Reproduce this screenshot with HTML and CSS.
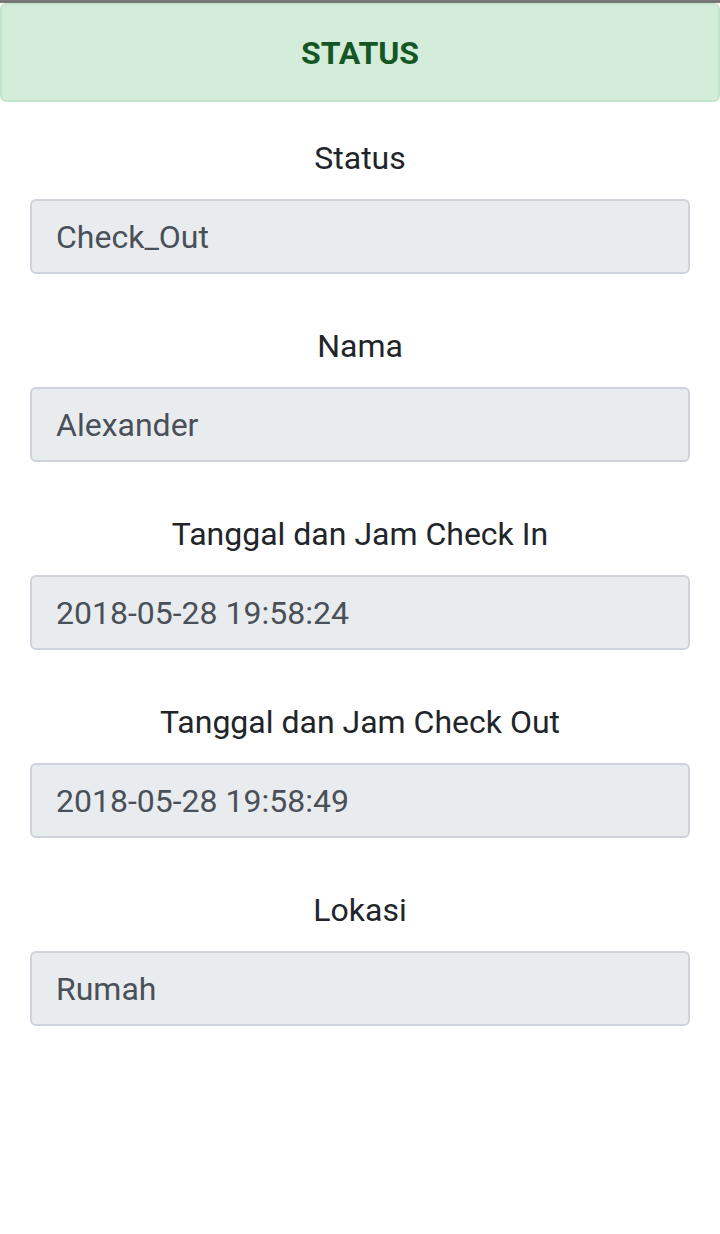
FILE: index.html
```html
<!DOCTYPE html>
<html>
<head>
  <title>Status</title>
  <link rel="stylesheet" href="styles.css">
</head>
<body>
  <div class="topbar"></div>
  <div class="alert">STATUS</div>

  <form class="status-form">
    <div class="form-group">
      <label for="status">Status</label>
      <input type="text" id="status" class="form-control" value="Check_Out" readonly>
    </div>
    <div class="form-group">
      <label for="nama">Nama</label>
      <input type="text" id="nama" class="form-control" value="Alexander" readonly>
    </div>
    <div class="form-group">
      <label for="checkin">Tanggal dan Jam Check In</label>
      <input type="text" id="checkin" class="form-control" value="2018-05-28 19:58:24" readonly>
    </div>
    <div class="form-group">
      <label for="checkout">Tanggal dan Jam Check Out</label>
      <input type="text" id="checkout" class="form-control" value="2018-05-28 19:58:49" readonly>
    </div>
    <div class="form-group">
      <label for="lokasi">Lokasi</label>
      <input type="text" id="lokasi" class="form-control" value="Rumah" readonly>
    </div>
  </form>
</body>
</html>
```

FILE: styles.css
```css
body {
  font-family: Roboto, "Liberation Sans", Arial, sans-serif;
  background-color: #fff;
  color: #212529;
  margin: 0;
  padding: 0;
}

.topbar {
  height: 3px;
  background-color: #777;
}

.alert {
  height: 95px;
  display: flex;
  align-items: center;
  justify-content: center;
  background-color: #d4edda;
  border: 2px solid #c3e6cb;
  border-radius: 6px;
  color: #155724;
  font-size: 32px;
  font-weight: bold;
}

.status-form {
  padding: 35px 30px 0;
}

.form-group {
  display: flex;
  flex-direction: column;
  margin-bottom: 51px;
}

.form-group label {
  text-align: center;
  font-size: 32px;
  line-height: 42px;
  margin-bottom: 20px;
}

.form-control {
  box-sizing: border-box;
  width: 100%;
  height: 75px;
  padding: 0 24px;
  font-family: inherit;
  font-size: 32px;
  color: #495057;
  background-color: #e9ecef;
  border: 2px solid #ced4da;
  border-radius: 6px;
  outline: none;
}
```
